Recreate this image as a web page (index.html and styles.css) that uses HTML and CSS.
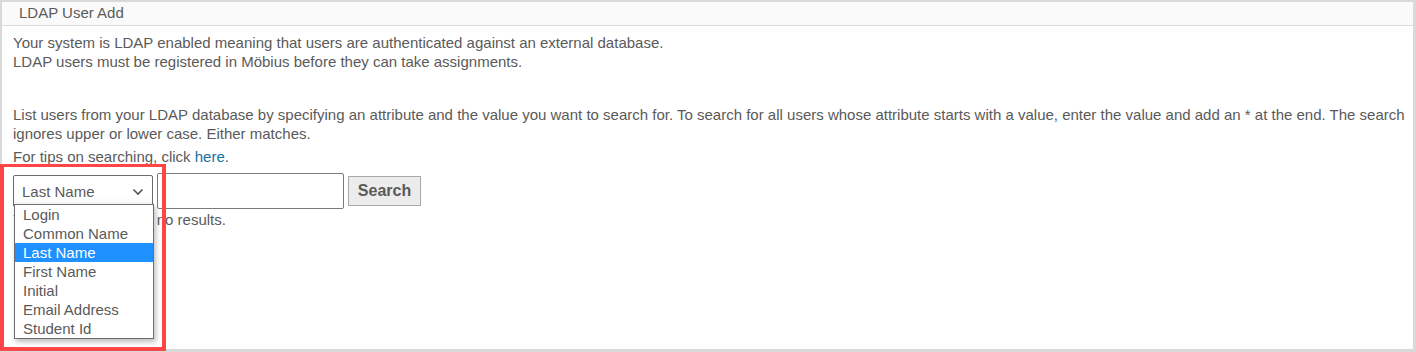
FILE: index.html
```html
<!DOCTYPE html>
<html>
<head>
<meta charset="utf-8">
<link rel="stylesheet" href="styles.css">
</head>
<body>
<div class="frame">
  <div class="header">LDAP User Add</div>
  <div class="content">
    <p class="intro">Your system is LDAP enabled meaning that users are authenticated against an external database.<br>LDAP users must be registered in Möbius before they can take assignments.</p>
    <p class="help">List users from your LDAP database by specifying an attribute and the value you want to search for. To search for all users whose attribute starts with a value, enter the value and add an * at the end. The search ignores upper or lower case. Either matches.</p>
    <p class="tips">For tips on searching, click <a href="#" class="link">here</a>.</p>
    <div class="search-row">
      <div class="select">
        <span class="select-value">Last Name</span>
        <svg class="chevron" width="12" height="8" viewBox="0 0 12 8"><polyline points="1.5,1.5 6,6 10.5,1.5" fill="none" stroke="#555" stroke-width="1.6"/></svg>
      </div>
      <div class="text-input"></div>
      <button class="search-btn">Search</button>
    </div>
    <p class="result">Your search returned no results.</p>
  </div>
  <ul class="dropdown">
    <li>Login</li>
    <li>Common Name</li>
    <li class="selected">Last Name</li>
    <li>First Name</li>
    <li>Initial</li>
    <li>Email Address</li>
    <li>Student Id</li>
  </ul>
</div>
<div class="annotation"></div>
</body>
</html>
```
FILE: styles.css
```css
html, body {
  margin: 0;
  padding: 0;
  background: #fff;
}
body {
  width: 1416px;
  height: 352px;
  position: relative;
  overflow: hidden;
  font-family: "Liberation Sans", Arial, sans-serif;
  font-size: 15px;
  color: #5a5a5a;
}
.frame {
  box-sizing: border-box;
  width: 1416px;
  height: 352px;
  border: 2px solid #d9d9d9;
  border-right-width: 3px;
  border-bottom-width: 3px;
  position: relative;
  background: #fff;
}
.header {
  height: 23px;
  line-height: 22px;
  padding-left: 17px;
  background: #fafafa;
  border-bottom: 1px solid #dcdcdc;
}
.content {
  padding: 7px 3px 0 11px;
  line-height: 19px;
}
.content p {
  margin: 0;
}
.help {
  margin-top: 34px !important;
}
.tips {
  margin-top: 4px !important;
}
.link {
  color: #13729e;
  text-decoration: none;
}
.search-row {
  display: flex;
  align-items: center;
  gap: 4px;
  margin-top: 7px;
  height: 36px;
}
.select {
  box-sizing: border-box;
  width: 140px;
  height: 32px;
  border: 1px solid #6b6b6b;
  border-radius: 2px;
  display: flex;
  align-items: center;
  justify-content: space-between;
  padding: 0 8px 0 8px;
  background: linear-gradient(#fff 70%, #f3f3f3);
  color: #5a5a5a;
  font-size: 15px;
}
.chevron {
  display: block;
  margin-top: 1px;
}
.text-input {
  box-sizing: border-box;
  width: 187px;
  height: 36px;
  border: 1px solid #7a7a7a;
  border-radius: 2px;
  background: #fff;
}
.search-btn {
  box-sizing: border-box;
  width: 73px;
  height: 30px;
  border: 1px solid #a9a9a9;
  border-radius: 0;
  background: #ececec;
  color: #5a5a5a;
  font-family: "Liberation Sans", Arial, sans-serif;
  font-weight: bold;
  font-size: 16px;
  padding: 0;
}
.result {
  margin-top: 1px !important;
}
.dropdown {
  position: absolute;
  left: 12px;
  top: 202px;
  width: 138px;
  margin: 0;
  padding: 0;
  list-style: none;
  background: #fff;
  border: 1px solid #6e6e6e;
  box-shadow: 2px 3px 5px rgba(0, 0, 0, 0.25);
  line-height: 19px;
  font-size: 15px;
  color: #5a5a5a;
}
.dropdown li {
  height: 19px;
  padding-left: 8px;
}
.dropdown li.selected {
  background: #1e90ff;
  color: #fff;
}
.annotation {
  position: absolute;
  left: 0;
  top: 164px;
  width: 158px;
  height: 180px;
  border: 4px solid #ff4545;
  border-top-width: 3px;
}
```
